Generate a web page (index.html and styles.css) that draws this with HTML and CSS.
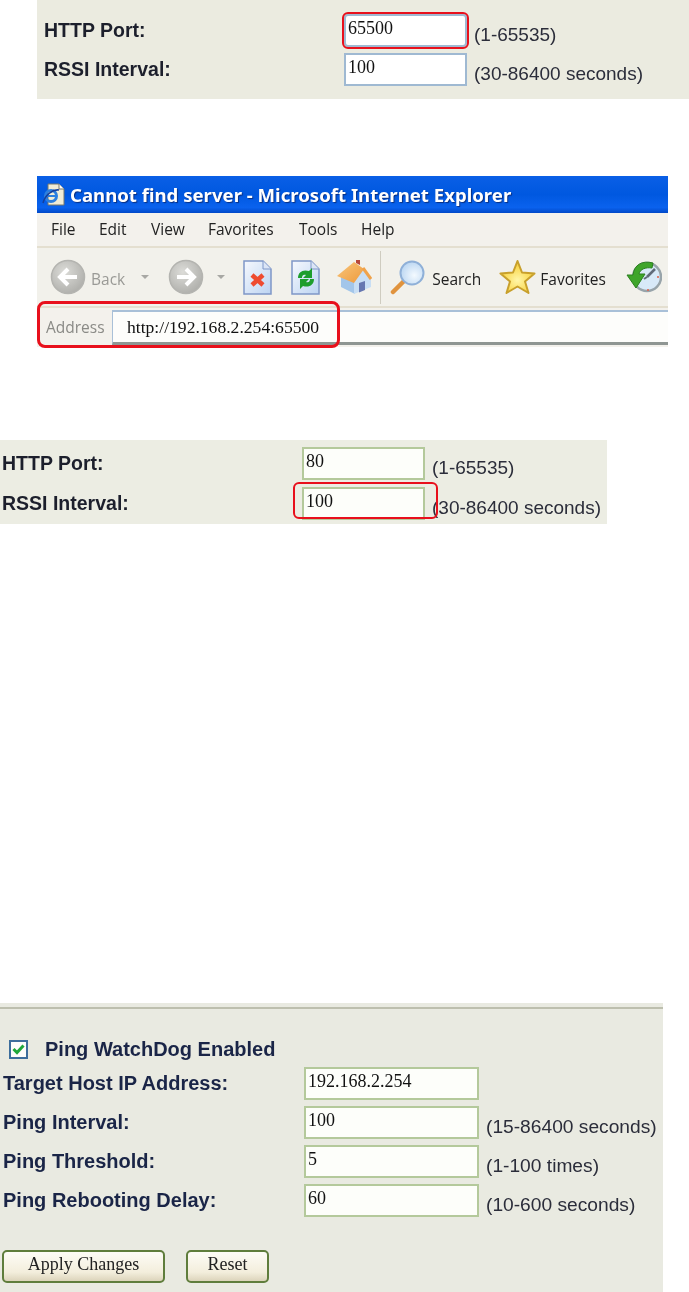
FILE: index.html
```html
<!DOCTYPE html>
<html lang="en">
<head>
    <meta charset="UTF-8">
    <meta name="viewport" content="width=device-width, initial-scale=1.0">
    <title>HTTP Port settings</title>
    <link rel="stylesheet" href="styles.css">
</head>
<body>
    <!-- first settings panel -->
    <div class="panel panel-top">
        <div class="row">
            <span class="label">HTTP Port:</span>
            <input class="field field-blue field-marked" type="text" value="65500">
            <span class="hint">(1-65535)</span>
        </div>
        <div class="row">
            <span class="label">RSSI Interval:</span>
            <input class="field field-blue" type="text" value="100">
            <span class="hint">(30-86400 seconds)</span>
        </div>
    </div>

    <!-- browser window -->
    <div class="browser">
        <div class="titlebar">
            <svg class="title-icon" width="23" height="25" viewBox="0 0 23 25">
                <path d="M6 2h11l5 5v16H6z" fill="#f1ecd6" stroke="#77776a"/>
                <path d="M17 2v5h5" fill="#fff" stroke="#77776a"/>
                <circle cx="9" cy="14" r="5.500" fill="none" stroke="#2c7fe0" stroke-width="3"/>
                <path d="M4 14h10" stroke="#2c7fe0" stroke-width="2"/>
                <path d="M1 21C3 13 11 7 17 8" fill="none" stroke="#163f9c" stroke-width="1.500"/>
            </svg>
            <span class="title-text">Cannot find server - Microsoft Internet Explorer</span>
        </div>
        <div class="menubar">
            <span class="menu-file">File</span>
            <span class="menu-edit">Edit</span>
            <span class="menu-view">View</span>
            <span class="menu-fav">Favorites</span>
            <span class="menu-tools">Tools</span>
            <span>Help</span>
        </div>
        <div class="toolbar">
            <svg class="tool tool-back" width="36" height="36" viewBox="0 0 36 36">
                <defs>
                    <radialGradient id="greyBall" cx="0.4" cy="0.35" r="0.7">
                        <stop offset="0" stop-color="#dcdcd8"/>
                        <stop offset="1" stop-color="#aeaeaa"/>
                    </radialGradient>
                </defs>
                <circle cx="18" cy="18" r="16.500" fill="url(#greyBall)" stroke="#b4b4b0" stroke-width="1.500"/>
                <path d="M27 18H11M18 10l-8 8 8 8" fill="none" stroke="#fff" stroke-width="4"/>
            </svg>
            <span class="tool-text tool-text-off">Back</span>
            <span class="caret caret-back"></span>
            <svg class="tool tool-forward" width="36" height="36" viewBox="0 0 36 36">
                <circle cx="18" cy="18" r="16.500" fill="url(#greyBall)" stroke="#b4b4b0" stroke-width="1.500"/>
                <path d="M9 18h16M18 10l8 8-8 8" fill="none" stroke="#fff" stroke-width="4"/>
            </svg>
            <span class="caret caret-forward"></span>
            <svg class="tool tool-stop" width="29" height="35" viewBox="0 0 29 35">
                <defs>
                    <linearGradient id="paper" x1="0" y1="0" x2="1" y2="1">
                        <stop offset="0" stop-color="#f6f8fd"/>
                        <stop offset="1" stop-color="#bcd4f2"/>
                    </linearGradient>
                </defs>
                <path d="M1 1h19l8 8v25H1z" fill="url(#paper)" stroke="#7f97c8" stroke-width="1.500"/>
                <path d="M20 1v8h8" fill="#dbe5f6" stroke="#7f97c8"/>
                <path d="M9 15l11 10M20 15L9 25" stroke="#ee4b30" stroke-width="4.500"/>
            </svg>
            <svg class="tool tool-refresh" width="29" height="35" viewBox="0 0 29 35">
                <path d="M1 1h19l8 8v25H1z" fill="url(#paper)" stroke="#7f97c8" stroke-width="1.500"/>
                <path d="M20 1v8h8" fill="#dbe5f6" stroke="#7f97c8"/>
                <path d="M7 18c0-6 5-9 11-7l3-3v10h-9l3-3c-3-1-4 1-4 3z" fill="#1e9e2c"/>
                <path d="M23 19c0 6-5 9-11 7l-3 3V19h9l-3 3c3 1 4-1 4-3z" fill="#1e9e2c"/>
            </svg>
            <svg class="tool tool-home" width="36" height="35" viewBox="0 0 36 35">
                <defs>
                    <linearGradient id="roof" x1="0" y1="0" x2="1" y2="1">
                        <stop offset="0" stop-color="#f8c67c"/>
                        <stop offset="1" stop-color="#ee9a3c"/>
                    </linearGradient>
                </defs>
                <path d="M5 16l14 6v12L5 27z" fill="#a3c6ea"/>
                <path d="M18 34V20l9-11 8 10v8z" fill="#c8def4"/>
                <path d="M23 23l6-2v9l-6 2.500z" fill="#6677b0"/>
                <path d="M1 16L18 2l10 7-10 14z" fill="url(#roof)"/>
                <path d="M27 8l8 11" stroke="#f0a24a" stroke-width="3"/>
                <path d="M20 0h4v5l-4-2z" fill="#b8473a"/>
            </svg>
            <span class="tool-sep"></span>
            <svg class="tool tool-search" width="36" height="35" viewBox="0 0 36 35">
                <defs>
                    <radialGradient id="lens" cx="0.6" cy="0.6" r="0.7">
                        <stop offset="0" stop-color="#f4faff"/>
                        <stop offset="1" stop-color="#b4d2f0"/>
                    </radialGradient>
                </defs>
                <path d="M3 32l11-11" stroke="#e0933e" stroke-width="4.500" stroke-linecap="round"/>
                <circle cx="22" cy="13" r="11.500" fill="url(#lens)" stroke="#8fb0d8" stroke-width="2"/>
            </svg>
            <span class="tool-text tool-text-search">Search</span>
            <svg class="tool tool-star" width="37" height="36" viewBox="0 0 37 36">
                <defs>
                    <radialGradient id="starFill" cx="0.5" cy="0.6" r="0.6">
                        <stop offset="0" stop-color="#fff6a8"/>
                        <stop offset="1" stop-color="#f8cc2c"/>
                    </radialGradient>
                </defs>
                <path d="M18.500 2l4.500 11.500 12.500 1-9.500 8 3.500 11.500-11-6.500-11 6.500L11 22.500l-9.500-8 12.500-1z" fill="url(#starFill)" stroke="#c8a02c" stroke-width="2" stroke-linejoin="round"/>
            </svg>
            <span class="tool-text tool-text-fav">Favorites</span>
            <svg class="tool tool-history" width="36" height="34" viewBox="0 0 36 34">
                <circle cx="21" cy="17" r="14" fill="#d8e9f8" stroke="#98a4aa" stroke-width="2.500"/>
                <path d="M21 17l8-8" stroke="#606a78" stroke-width="2.500"/>
                <path d="M21 17l-3 2" stroke="#606a78" stroke-width="2"/>
                <path d="M22 29v2M31 17h2" stroke="#e0604a" stroke-width="1.500"/>
                <path d="M27 3C16 0 8 5 7 15H1l9 13 9-14h-6c1-5 7-7 13-6z" fill="#3fa52a" stroke="#2c8020"/>
            </svg>
        </div>
        <div class="addressbar">
            <span class="address-label">Address</span>
            <div class="address-box">http://192.168.2.254:65500</div>
            <span class="address-mark"></span>
        </div>
    </div>

    <!-- second settings panel -->
    <div class="panel panel-middle">
        <div class="row">
            <span class="label">HTTP Port:</span>
            <input class="field" type="text" value="80">
            <span class="hint">(1-65535)</span>
        </div>
        <div class="row">
            <span class="label">RSSI Interval:</span>
            <input class="field" type="text" value="100">
            <span class="hint">(30-86400 seconds)</span>
        </div>
        <span class="middle-mark"></span>
    </div>

    <!-- ping watchdog panel -->
    <div class="panel panel-ping">
        <div class="ping-check">
            <span class="checkbox">
                <svg width="13" height="11" viewBox="0 0 13 11">
                    <path d="M1.500 5l3.500 3.500 6.500-7" fill="none" stroke="#1fa83a" stroke-width="3"/>
                </svg>
            </span>
            <span class="label-ping">Ping WatchDog Enabled</span>
        </div>
        <div class="ping-rows">
            <div class="row">
                <span class="label">Target Host IP Address:</span>
                <input class="field" type="text" value="192.168.2.254">
            </div>
            <div class="row">
                <span class="label">Ping Interval:</span>
                <input class="field" type="text" value="100">
                <span class="hint">(15-86400 seconds)</span>
            </div>
            <div class="row">
                <span class="label">Ping Threshold:</span>
                <input class="field" type="text" value="5">
                <span class="hint">(1-100 times)</span>
            </div>
            <div class="row">
                <span class="label">Ping Rebooting Delay:</span>
                <input class="field" type="text" value="60">
                <span class="hint">(10-600 seconds)</span>
            </div>
        </div>
        <div class="buttons">
            <button class="btn btn-apply">Apply Changes</button>
            <button class="btn btn-reset">Reset</button>
        </div>
    </div>
</body>
</html>
```

FILE: styles.css
```css
html, body {
    margin: 0;
    padding: 0;
    background-color: #ffffff;
}

body {
    font-family: "Liberation Sans", Arial, sans-serif;
    height: 1292px;
    overflow: hidden;
}

/* the source pictures are soft, scaled-up captures */
.panel, .browser {
    filter: blur(0.4px);
}

.panel {
    background-color: #ebebe0;
    position: relative;
    color: #1c1f2c;
}

.row {
    display: flex;
    align-items: center;
    height: 33px;
}

.label {
    font-size: 19.5px;
    font-weight: bold;
    width: 300px;
    flex: none;
}

.hint {
    font-size: 19px;
    margin-left: 7px;
    padding-top: 9px;
    white-space: nowrap;
    color: #2b2d3a;
}

.field {
    box-sizing: border-box;
    width: 123px;
    height: 33px;
    flex: none;
    margin: 0;
    padding: 0 0 5px 2px;
    border: 2px solid #b4c99b;
    background-color: #fdfefa;
    font-family: "Liberation Serif", serif;
    font-size: 18px;
    color: #111111;
    outline: none;
}

.field-blue {
    border-color: #9fb9d2;
    background-color: #ffffff;
}

.field-marked {
    outline: 2px solid #e8101c;
    outline-offset: 0;
    border-radius: 4px;
}

/* panel 1 */
.panel-top {
    margin-left: 37px;
    height: 99px;
    box-sizing: border-box;
    padding: 14px 0 0 7px;
    display: flex;
    flex-direction: column;
    gap: 6px;
}

/* browser */
.browser {
    position: relative;
    width: 631px;
    margin: 77px 0 0 37px;
    height: 171px;
    background-color: #f3f1ec;
    display: flex;
    flex-direction: column;
}

.titlebar {
    height: 37px;
    flex: none;
    display: flex;
    align-items: center;
    padding-left: 5px;
    gap: 5px;
    box-sizing: border-box;
    background: linear-gradient(#0a5fe6 0%, #0058e0 50%, #0a62ee 85%, #0048c8 100%);
}

.title-text {
    color: #ffffff;
    font-family: "Noto Sans", sans-serif;
    font-weight: bold;
    font-size: 18.6px;
    text-shadow: 1px 1px 1px #0a2f80;
    white-space: nowrap;
}

.menubar {
    height: 35px;
    flex: none;
    box-sizing: border-box;
    display: flex;
    align-items: center;
    padding: 0 0 2px 14px;
    border-bottom: 2px solid #e4dfd0;
    font-family: "Open Sans", sans-serif;
    font-size: 15.5px;
    color: #222222;
}

.menu-file { width: 48px; }
.menu-edit { width: 52px; }
.menu-view { width: 57px; }
.menu-fav { width: 91px; }
.menu-tools { width: 62px; }

.toolbar {
    height: 60px;
    flex: none;
    box-sizing: border-box;
    display: flex;
    align-items: center;
    padding-left: 13px;
    border-bottom: 2px solid #e4dfd0;
    background-color: #f2f1eb;
}

.tool {
    flex: none;
}

.tool-text {
    font-family: "Open Sans", sans-serif;
    font-size: 15.5px;
    color: #222222;
    padding-top: 3px;
}

.tool-text-off {
    color: #9a9a96;
    margin-left: 5px;
}

.tool-text-search { margin-left: 6px; }
.tool-text-fav { margin-left: 4px; }

.caret {
    width: 0;
    height: 0;
    border-left: 4px solid transparent;
    border-right: 4px solid transparent;
    border-top: 4px solid #a8a8a4;
}

.caret-back { margin: 0 0 0 16px; }
.tool-forward { margin-left: 19px; }
.caret-forward { margin-left: 13px; }
.tool-stop { margin-left: 18px; }
.tool-refresh { margin-left: 19px; }
.tool-home { margin-left: 16px; }

.tool-sep {
    width: 1px;
    height: 53px;
    background-color: #cfccc0;
    margin-left: 8px;
}

.tool-search { margin-left: 9px; }
.tool-star { margin-left: 18px; }
.tool-history { margin-left: 20px; }

.addressbar {
    flex: 1;
    display: flex;
    align-items: flex-start;
    padding-top: 2px;
    box-sizing: border-box;
    position: relative;
}

.address-label {
    width: 75px;
    padding: 6px 0 0 9px;
    box-sizing: border-box;
    font-family: "Open Sans", sans-serif;
    font-size: 15.5px;
    color: #8a8a86;
    flex: none;
}

.address-box {
    flex: 1;
    box-sizing: border-box;
    height: 35px;
    padding: 5px 0 0 14px;
    background-color: #fdfdfb;
    border-top: 2px solid #a9c0d8;
    border-left: 1px solid #a9c0d8;
    border-bottom: 3px solid #8f9693;
    font-family: "Liberation Serif", serif;
    font-size: 17.6px;
    color: #111111;
}

.address-mark {
    position: absolute;
    left: 0;
    top: -7px;
    width: 303px;
    height: 47px;
    box-sizing: border-box;
    border: 3px solid #e8101c;
    border-radius: 8px;
}

/* panel 2 */
.panel-middle {
    width: 607px;
    height: 84px;
    margin-top: 93px;
    box-sizing: border-box;
    padding: 7px 0 0 2px;
    display: flex;
    flex-direction: column;
    gap: 7px;
    background-color: #ecede3;
}

.middle-mark {
    position: absolute;
    left: 293px;
    top: 42px;
    width: 145px;
    height: 37px;
    box-sizing: border-box;
    border: 2px solid #e8101c;
    border-radius: 6px;
}

/* ping panel */
.panel-ping {
    width: 663px;
    height: 289px;
    margin-top: 479px;
    box-sizing: border-box;
    padding: 35px 0 0 3px;
    background-color: #e9eae1;
    background-image: linear-gradient(#e9eae1 4px, #bdbfae 4px, #bdbfae 6px, #e9eae1 6px);
    color: #1a2547;
}

.ping-check {
    display: flex;
    align-items: center;
    height: 22px;
    margin-left: 6px;
    gap: 17px;
}

.checkbox {
    width: 19px;
    height: 19px;
    box-sizing: border-box;
    border: 2px solid #3d6e9c;
    background-color: #fdfdfb;
    display: flex;
    align-items: center;
    justify-content: center;
}

.label-ping {
    font-size: 20px;
    font-weight: bold;
}

.ping-rows {
    display: flex;
    flex-direction: column;
    gap: 6px;
    margin-top: 7px;
}

.ping-rows .label {
    font-size: 20px;
    width: 301px;
}

.ping-rows .field {
    width: 175px;
}

.ping-rows .hint {
    font-size: 19.2px;
}

.buttons {
    display: flex;
    gap: 21px;
    margin: 33px 0 0 -1px;
}

.btn {
    height: 33px;
    box-sizing: border-box;
    border: 2px solid #5f7d3c;
    border-radius: 5px;
    background: linear-gradient(#fdfcf6, #f3eedc 70%, #dcd4bb);
    font-family: "Liberation Serif", serif;
    font-size: 18px;
    color: #222222;
    padding: 0 0 4px;
}

.btn-apply { width: 163px; }
.btn-reset { width: 83px; }
```
